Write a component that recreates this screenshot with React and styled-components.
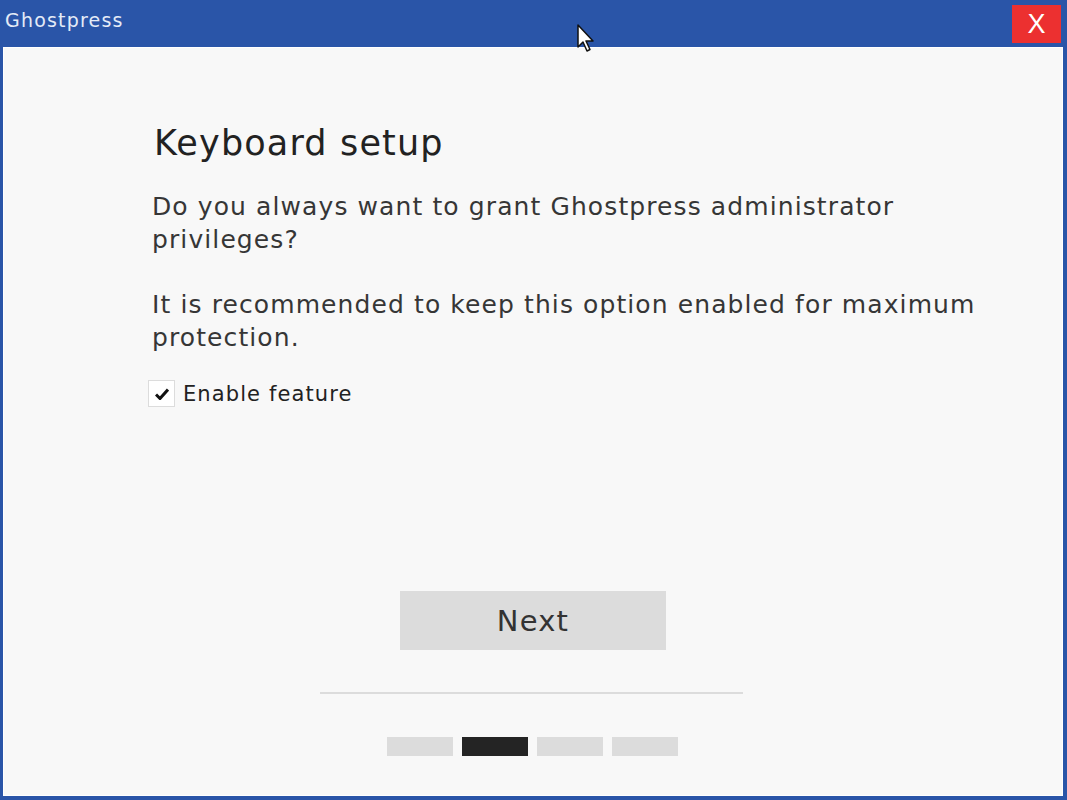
import React from "react";
import styled, { createGlobalStyle } from "styled-components";

const steps = [false, true, false, false];

const App = () => {
  return (
    <>
      <GlobalStyle />
      <Window>
        <TitleBar>
          <Title>Ghostpress</Title>
          <CloseButton>X</CloseButton>
        </TitleBar>
        <Body>
          <Content>
            <Heading>Keyboard setup</Heading>
            <Paragraph>
              Do you always want to grant Ghostpress administrator privileges?
            </Paragraph>
            <Paragraph>
              It is recommended to keep this option enabled for maximum protection.
            </Paragraph>
            <CheckRow>
              <CheckBox>
                <svg width="14" height="12" viewBox="0 0 14 12">
                  <path d="M1 6.5 L5 10.5 L13 1.5" fill="none" stroke="#111" strokeWidth="3" strokeLinejoin="miter" />
                </svg>
              </CheckBox>
              <CheckLabel>Enable feature</CheckLabel>
            </CheckRow>
          </Content>
          <Footer>
            <NextButton>Next</NextButton>
            <Divider />
            <Steps>
              {steps.map((active, i) => (
                <Step key={i} active={active} />
              ))}
            </Steps>
          </Footer>
        </Body>
        <Cursor width="20" height="30" viewBox="0 0 20 30">
          <path d="M1 1 L1 23 L6 18 L10 27 L13 25.5 L9 17 L16 17 Z" fill="#fff" stroke="#111" strokeWidth="1.5" strokeLinejoin="round" />
        </Cursor>
      </Window>
    </>
  );
};

export default App;

const GlobalStyle = createGlobalStyle`
  html, body {
    margin: 0;
    padding: 0;
    background: #2a55a8;
  }
  body {
    font-family: "DejaVu Sans", Verdana, sans-serif;
  }
`;

const Window = styled.div`
  position: relative;
  width: 1067px;
  height: 800px;
  background: #2a55a8;
  display: flex;
  flex-direction: column;
  box-sizing: border-box;
  padding: 0 4px 4px 3px;
  overflow: hidden;
`;

const TitleBar = styled.div`
  height: 47px;
  display: flex;
  align-items: flex-start;
  justify-content: space-between;
  flex-shrink: 0;
`;

const Title = styled.div`
  color: #e4ebf7;
  font-size: 19px;
  letter-spacing: 1.2px;
  margin: 9px 0 0 2px;
`;

const CloseButton = styled.div`
  width: 49px;
  height: 38px;
  margin: 5px 2px 0 0;
  background: #ec3030;
  color: #fff;
  font-family: "Liberation Sans", Arial, sans-serif;
  font-size: 27px;
  display: flex;
  align-items: center;
  justify-content: center;
`;

const Body = styled.div`
  flex: 1;
  background: #f8f8f8;
  border: 1px solid #ffffff;
  display: flex;
  flex-direction: column;
  justify-content: space-between;
`;

const Content = styled.div`
  padding: 74px 0 0 148px;
  color: #333;
`;

const Heading = styled.h1`
  margin: 0 0 26px 2px;
  font-size: 35px;
  line-height: 42px;
  letter-spacing: 1.15px;
  font-weight: normal;
  color: #222;
`;

const Paragraph = styled.p`
  margin: 0 0 32px 0;
  width: 850px;
  font-size: 25px;
  line-height: 33px;
  letter-spacing: 1.1px;
  color: #363636;
`;

const CheckRow = styled.div`
  display: flex;
  align-items: center;
  gap: 8px;
  margin-top: -6px;
  margin-left: -4px;
`;

const CheckBox = styled.div`
  width: 25px;
  height: 25px;
  border: 1px solid #dcdcdc;
  background: #fff;
  display: flex;
  align-items: center;
  justify-content: center;
`;

const CheckLabel = styled.span`
  font-size: 21px;
  letter-spacing: 1.1px;
  color: #222;
`;

const Footer = styled.div`
  display: flex;
  flex-direction: column;
  align-items: center;
  padding-bottom: 39px;
`;

const NextButton = styled.button`
  width: 266px;
  height: 59px;
  background: #dcdcdc;
  border: none;
  font-family: "DejaVu Sans", Verdana, sans-serif;
  font-size: 29px;
  letter-spacing: 1.2px;
  color: #333;
  cursor: pointer;
`;

const Divider = styled.div`
  width: 423px;
  height: 2px;
  background: #dcdcdc;
  margin: 42px 3px 43px 0;
`;

const Steps = styled.div`
  display: flex;
  gap: 9px;
  margin-right: 2px;
`;

const Step = styled.div`
  width: 66px;
  height: 19px;
  background: ${(p) => (p.active ? "#242424" : "#dcdcdc")};
`;

const Cursor = styled.svg`
  position: absolute;
  left: 577px;
  top: 24px;
`;
